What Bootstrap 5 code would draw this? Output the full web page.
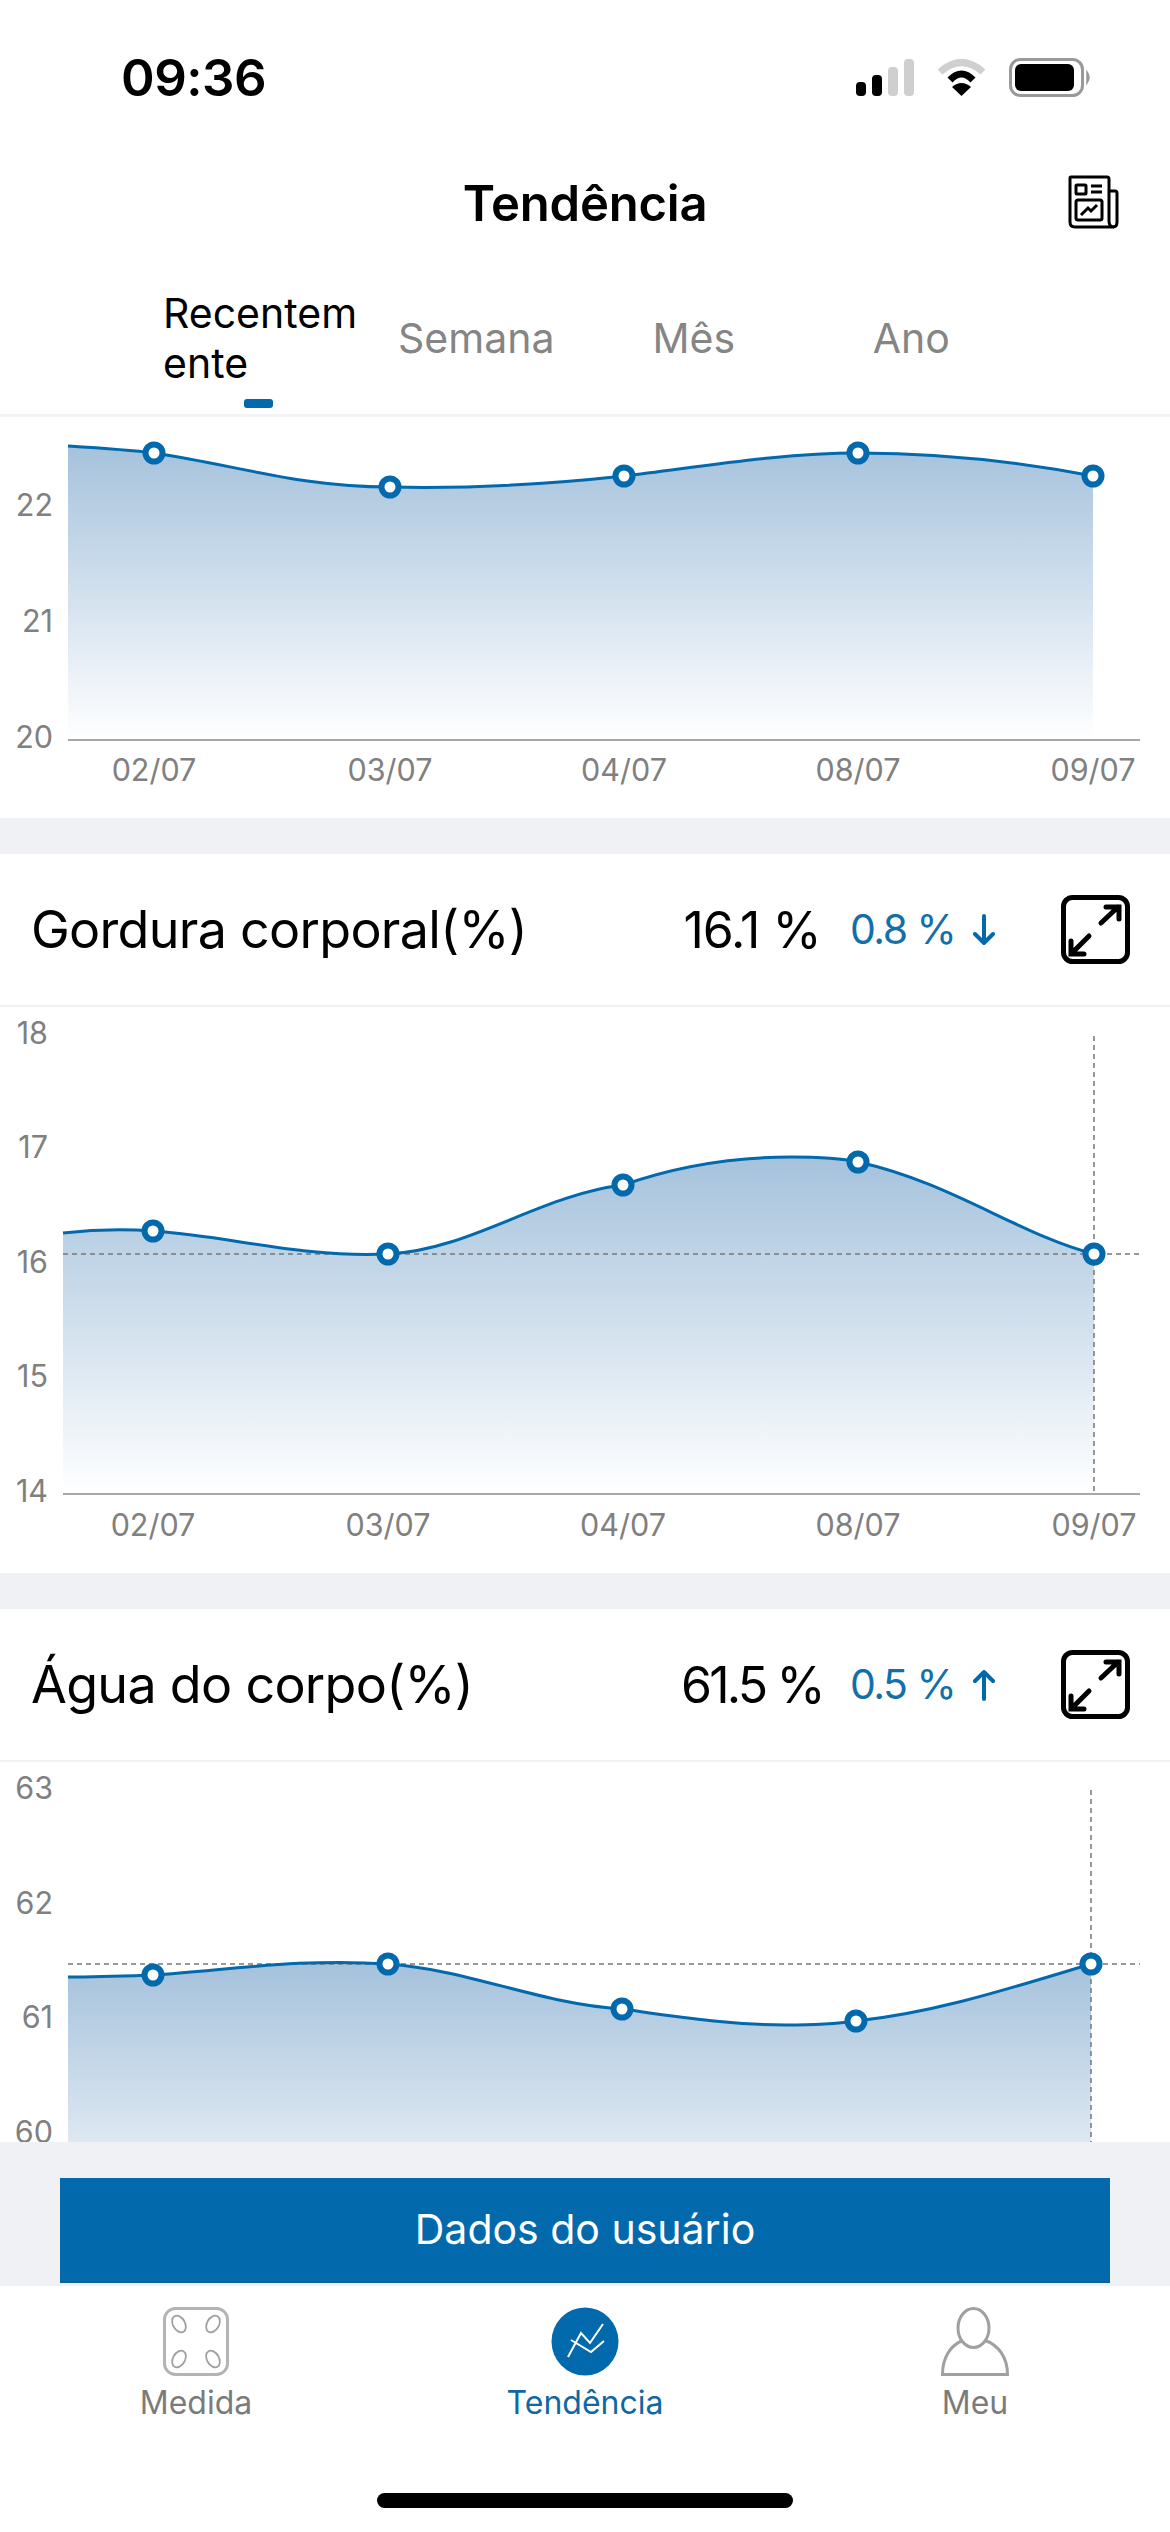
<!doctype html>
<html lang="pt">
<head>
<meta charset="utf-8">
<title>Tendência</title>
<link href="https://cdn.jsdelivr.net/npm/bootstrap@5.3.0/dist/css/bootstrap.min.css" rel="stylesheet">
<style>
html,body{margin:0;background:#fff}
body{font-family:Inter,"Noto Sans",sans-serif;color:#000}
.phone{width:1170px;height:2532px;overflow:hidden;background:#fff}
.status-row{height:130px;padding:0 79px 0 121px;position:relative}
.clock{font-size:51px;font-weight:600;line-height:1;padding-top:52px;letter-spacing:-.5px}
.status-icons{padding-top:58px;margin-left:auto}
.title-row{height:146px}
.app-title{font-size:49px;font-weight:600;line-height:1;letter-spacing:-.2px}
.doc-btn{right:51px;top:45px}
.tabs-row{padding-left:150px;height:141px;border-bottom:3px solid #f1f3f6}
.tab-cell{width:217.5px}
.tab-label{height:123px;font-size:41px;line-height:50px;color:#858585}
.tab-label span{display:block}
.tab-on{color:#000;text-align:left;padding-left:13px}
.tab-on span{width:205px;word-break:break-all}
.tab-mark{height:9px;width:29px;border-radius:3px;background:#0169ac}
.scroll-area{height:1725px;overflow:hidden;background:#fff}
.chart-wrap svg{display:block}
.band{height:36px;background:#f0f1f5}
.metric-row{height:153px;border-bottom:2px solid #f0f1f5;padding:0 40px 0 31px}
.metric-name{font-size:52px;letter-spacing:-.7px;line-height:1}
.metric-value{width:202px;padding-left:6px;font-size:50px;letter-spacing:-1px;text-align:center;line-height:1;white-space:nowrap}
.metric-value-tight{letter-spacing:-2.800px}
.metric-delta{width:142px;font-size:41px;letter-spacing:-1.500px;color:#126fa9;line-height:1;gap:18px;white-space:nowrap}
.metric-expand{margin-left:69px}
.axis{font-family:Inter,"Noto Sans",sans-serif;font-size:30.500px;fill:#808080}
.foot-band{height:144px;background:#f0f1f5;padding:36px 60px 3px}
.user-btn{height:105px;width:1050px;background:#0169ac;color:#fff;border:0;border-radius:0;font-size:41px;border-bottom:1px solid #0d5e90}
.tabbar{height:246px;background:#fff;position:relative}
.bar-item{width:260px;top:21px}
.bar-label{font-size:32px;line-height:1;color:#7b7b7b;margin-top:11px}
.bar-on{color:#0f68a3}
.home-bar{width:416px;height:15px;border-radius:8px;background:#000;left:377px;top:207px}
</style>
</head>
<body>
<div class="phone d-flex flex-column">
  <div class="status-row d-flex flex-shrink-0">
    <div class="clock">09:36</div>
    <div class="status-icons">
      <svg width="235" height="40" viewBox="856 58 235 40">
        <rect x="856" y="82" width="10" height="14" rx="4" fill="#000"/>
        <rect x="872" y="75" width="10" height="21" rx="4" fill="#000"/>
        <rect x="888" y="67" width="10" height="29" rx="4" fill="#cfcfcf"/>
        <rect x="904" y="59" width="10" height="37" rx="4" fill="#cfcfcf"/>
        <g transform="translate(936 59)">
          <path d="M4 13Q25.500-6 47 13" fill="none" stroke="#d0d0d0" stroke-width="7"/>
          <path d="M14 21Q25.500 9 37 21" fill="none" stroke="#000" stroke-width="7"/>
          <path d="M25.500 37L16 28Q25.500 20 35 28Z" fill="#000"/>
        </g>
        <rect x="1010.500" y="59.500" width="72" height="36" rx="10" fill="none" stroke="#999" stroke-width="3"/>
        <rect x="1015" y="64" width="59" height="27" rx="6" fill="#000"/>
        <path d="M1087 72Q1091 77 1087 83Z" fill="#999" stroke="#999" stroke-width="1.500"/>
      </svg>
    </div>
  </div>

  <div class="title-row position-relative d-flex align-items-center justify-content-center flex-shrink-0">
    <div class="app-title">Tendência</div>
    <svg class="doc-btn position-absolute" width="51" height="54" viewBox="0 0 51 54" fill="none" stroke="#000" stroke-width="3">
      <path d="M7 52Q2 52 2 47V3Q2 2 3 2H39Q41 2 41 4V46Q41 52 46 52Z"/>
      <path d="M41 16H47Q49 16 49 18V47Q49 52 45 52"/>
      <rect x="8" y="10" width="10" height="9" rx="1"/>
      <path d="M23 11H34M23 17H34"/>
      <rect x="8" y="25" width="26" height="20" rx="2"/>
      <path d="M13 40L20 33L23 36L29 30"/>
    </svg>
  </div>

  <div class="tabs-row d-flex flex-shrink-0">
    <div class="tab-cell">
      <div class="tab-label tab-on d-flex align-items-center"><span>Recentemente</span></div>
      <div class="tab-mark mx-auto"></div>
    </div>
    <div class="tab-cell"><div class="tab-label d-flex align-items-center justify-content-center"><span>Semana</span></div></div>
    <div class="tab-cell"><div class="tab-label d-flex align-items-center justify-content-center"><span>Mês</span></div></div>
    <div class="tab-cell"><div class="tab-label d-flex align-items-center justify-content-center"><span>Ano</span></div></div>
  </div>

  <div class="scroll-area flex-shrink-0">
    <div class="chart-wrap">
      <svg width="1170" height="401" viewBox="0 417 1170 401">
        <defs><linearGradient id="g1" gradientUnits="userSpaceOnUse" x1="0" y1="446" x2="0" y2="740"><stop offset="0" stop-color="#a5c2dc"/><stop offset="1" stop-color="#fff"/></linearGradient></defs>
        <path d="M68 446C100 448 130 450 154 453C240 466 300 487 390 487C480 489 560 483 624 476C700 467 780 453 858 453C945 453 1020 462 1093 476V740H68Z" fill="url(#g1)"/>
        <path d="M68 740H1140" stroke="#8a8a8a" stroke-width="1.500"/>
        <path d="M68 446C100 448 130 450 154 453C240 466 300 487 390 487C480 489 560 483 624 476C700 467 780 453 858 453C945 453 1020 462 1093 476" fill="none" stroke="#0169ac" stroke-width="3"/>
        <g fill="#fff" stroke="#0169ac" stroke-width="6"><circle cx="154" cy="453" r="8.500"/><circle cx="390" cy="487" r="8.500"/><circle cx="624" cy="476" r="8.500"/><circle cx="858" cy="453" r="8.500"/><circle cx="1093" cy="476" r="8.500"/></g>
        <g class="axis" text-anchor="end"><text x="53" y="516">22</text><text x="53" y="632">21</text><text x="53" y="748">20</text></g>
        <g class="axis" text-anchor="middle"><text x="154" y="781">02/07</text><text x="390" y="781">03/07</text><text x="624" y="781">04/07</text><text x="858" y="781">08/07</text><text x="1093" y="781">09/07</text></g>
      </svg>
    </div>
    <div class="band"></div>

    <div class="metric-row d-flex align-items-center">
      <div class="metric-name flex-grow-1">Gordura corporal(%)</div>
      <div class="metric-value">16.1 %</div>
      <div class="metric-delta d-flex align-items-center"><span>0.8 %</span>
        <svg class="flex-shrink-0" width="22" height="32" viewBox="0 0 22 32" fill="none" stroke="#0169ac" stroke-width="4" stroke-linecap="round" stroke-linejoin="round"><path d="M11 2V29M2 20L11 29L20 20"/></svg>
      </div>
      <svg class="metric-expand flex-shrink-0" width="69" height="69" viewBox="0 0 69 69" fill="none" stroke="#000" stroke-width="5" stroke-linecap="round"><rect x="2.500" y="2.500" width="64" height="64" rx="9"/><path d="M40 28L57 12M45 12H58V24M28 41L11 58M10 46V59H23"/></svg>
    </div>

    <div class="chart-wrap">
      <svg width="1170" height="566" viewBox="0 1007 1170 566">
        <defs><linearGradient id="g2" gradientUnits="userSpaceOnUse" x1="0" y1="1157" x2="0" y2="1494"><stop offset="0" stop-color="#a5c2dc"/><stop offset="1" stop-color="#fff"/></linearGradient></defs>
        <path d="M63 1233C90 1230 125 1229 153 1231C230 1236 300 1258 388 1254C470 1250 540 1195 623 1185C680 1165 740 1157 791 1157C815 1157 840 1158 858 1162C950 1182 1020 1235 1094 1254V1494H63Z" fill="url(#g2)"/>
        <path d="M63 1494H1140" stroke="#8a8a8a" stroke-width="1.500"/>
        <path d="M63 1254H1140M1094 1036V1494" stroke="#777" stroke-width="1.500" stroke-dasharray="5 4"/>
        <path d="M63 1233C90 1230 125 1229 153 1231C230 1236 300 1258 388 1254C470 1250 540 1195 623 1185C680 1165 740 1157 791 1157C815 1157 840 1158 858 1162C950 1182 1020 1235 1094 1254" fill="none" stroke="#0169ac" stroke-width="3"/>
        <g fill="#fff" stroke="#0169ac" stroke-width="6"><circle cx="153" cy="1231" r="8.500"/><circle cx="388" cy="1254" r="8.500"/><circle cx="623" cy="1185" r="8.500"/><circle cx="858" cy="1162" r="8.500"/><circle cx="1094" cy="1254" r="8.500"/></g>
        <g class="axis" text-anchor="end"><text x="48" y="1044">18</text><text x="48" y="1158">17</text><text x="48" y="1273">16</text><text x="48" y="1387">15</text><text x="48" y="1502">14</text></g>
        <g class="axis" text-anchor="middle"><text x="153" y="1536">02/07</text><text x="388" y="1536">03/07</text><text x="623" y="1536">04/07</text><text x="858" y="1536">08/07</text><text x="1094" y="1536">09/07</text></g>
      </svg>
    </div>
    <div class="band"></div>

    <div class="metric-row d-flex align-items-center">
      <div class="metric-name flex-grow-1">Água do corpo(%)</div>
      <div class="metric-value metric-value-tight">61.5 %</div>
      <div class="metric-delta d-flex align-items-center"><span>0.5 %</span>
        <svg class="flex-shrink-0" width="22" height="32" viewBox="0 0 22 32" fill="none" stroke="#0169ac" stroke-width="4" stroke-linecap="round" stroke-linejoin="round"><path d="M11 30V3M2 12L11 3L20 12"/></svg>
      </div>
      <svg class="metric-expand flex-shrink-0" width="69" height="69" viewBox="0 0 69 69" fill="none" stroke="#000" stroke-width="5" stroke-linecap="round"><rect x="2.500" y="2.500" width="64" height="64" rx="9"/><path d="M40 28L57 12M45 12H58V24M28 41L11 58M10 46V59H23"/></svg>
    </div>

    <div class="chart-wrap">
      <svg width="1170" height="380" viewBox="0 1762 1170 380">
        <defs><linearGradient id="g3" gradientUnits="userSpaceOnUse" x1="0" y1="1964" x2="0" y2="2249"><stop offset="0" stop-color="#a5c2dc"/><stop offset="1" stop-color="#fff"/></linearGradient></defs>
        <path d="M68 1977C100 1977 125 1976 153 1975C230 1970 300 1958 388 1964C470 1970 540 2004 622 2009C680 2017 730 2025 786 2025C810 2025 835 2024 856 2021C940 2012 1020 1985 1091 1964V2249H68Z" fill="url(#g3)"/>
        <path d="M68 1964H1140M1091 1790V2142" stroke="#777" stroke-width="1.500" stroke-dasharray="5 4"/>
        <path d="M68 1977C100 1977 125 1976 153 1975C230 1970 300 1958 388 1964C470 1970 540 2004 622 2009C680 2017 730 2025 786 2025C810 2025 835 2024 856 2021C940 2012 1020 1985 1091 1964" fill="none" stroke="#0169ac" stroke-width="3"/>
        <g fill="#fff" stroke="#0169ac" stroke-width="6"><circle cx="153" cy="1975" r="8.500"/><circle cx="388" cy="1964" r="8.500"/><circle cx="622" cy="2009" r="8.500"/><circle cx="856" cy="2021" r="8.500"/><circle cx="1091" cy="1964" r="8.500"/></g>
        <g class="axis" text-anchor="end"><text x="53" y="1799">63</text><text x="53" y="1914">62</text><text x="53" y="2028">61</text><text x="53" y="2143">60</text></g>
      </svg>
    </div>
  </div>

  <div class="foot-band flex-shrink-0">
    <button class="btn user-btn d-flex align-items-center justify-content-center" type="button">Dados do usuário</button>
  </div>

  <div class="tabbar flex-shrink-0">
    <div class="bar-item position-absolute d-flex flex-column align-items-center" style="left:66px">
      <svg width="66" height="69" viewBox="0 0 66 69" fill="none">
        <rect x="1.500" y="1.500" width="63" height="66" rx="11" stroke="#b4b4b4" stroke-width="3"/>
        <g stroke="#a0a0a0" stroke-width="1.800">
          <ellipse cx="16" cy="17" rx="6" ry="9" transform="rotate(-30 16 17)"/>
          <ellipse cx="50" cy="17" rx="6" ry="9" transform="rotate(30 50 17)"/>
          <ellipse cx="16" cy="52" rx="6" ry="9" transform="rotate(30 16 52)"/>
          <ellipse cx="50" cy="52" rx="6" ry="9" transform="rotate(-30 50 52)"/>
        </g>
      </svg>
      <div class="bar-label">Medida</div>
    </div>
    <div class="bar-item position-absolute d-flex flex-column align-items-center" style="left:455px">
      <svg width="68" height="69" viewBox="0 0 68 69" fill="none">
        <ellipse cx="34" cy="34.500" rx="33.500" ry="34" fill="#0169ac"/>
        <path d="M17 50L30 26L39 36L52 17M20 33L40 45L53 34" stroke="#fff" stroke-width="2"/>
      </svg>
      <div class="bar-label bar-on">Tendência</div>
    </div>
    <div class="bar-item position-absolute d-flex flex-column align-items-center" style="left:845px">
      <svg width="68" height="69" viewBox="0 0 68 69" fill="none" stroke="#a0a0a0" stroke-width="3">
        <path d="M1.500 67.500H66.500C66.500 51 58 38 43 33Q33 45 23 33C9 38 1.500 51 1.500 67.500Z"/>
        <ellipse cx="32.500" cy="21" rx="15.500" ry="19.500" fill="#fff"/>
      </svg>
      <div class="bar-label">Meu</div>
    </div>
    <div class="home-bar position-absolute"></div>
  </div>
</div>
<script src="https://cdn.jsdelivr.net/npm/bootstrap@5.3.0/dist/js/bootstrap.bundle.min.js"></script>
</body>
</html>
